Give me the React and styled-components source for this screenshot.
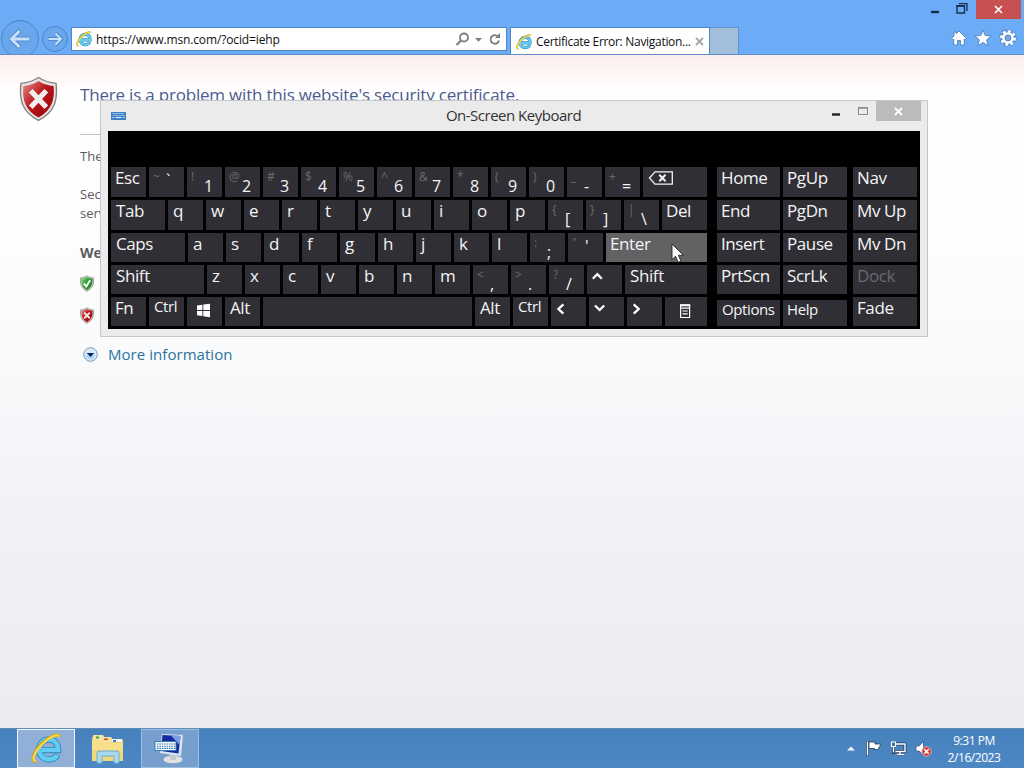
import styled, { createGlobalStyle, css } from 'styled-components';

const mainRows = [
  [
    { label: 'Esc' },
    { shifted: '~', label: '`', raised: true },
    { shifted: '!', label: '1' },
    { shifted: '@', label: '2' },
    { shifted: '#', label: '3' },
    { shifted: '$', label: '4' },
    { shifted: '%', label: '5' },
    { shifted: '^', label: '6' },
    { shifted: '&', label: '7' },
    { shifted: '*', label: '8' },
    { shifted: '(', label: '9' },
    { shifted: ')', label: '0' },
    { shifted: '_', label: '-' },
    { shifted: '+', label: '=' },
    { icon: 'backspace', width: 64 },
  ],
  [
    { label: 'Tab', width: 54, indent: 5 },
    ...'qwertyuiop'.split('').map(label => ({ label, indent: 5 })),
    { shifted: '{', label: '[' },
    { shifted: '}', label: ']' },
    { shifted: '|', label: '\\' },
    { label: 'Del', width: 45 },
  ],
  [
    { label: 'Caps', width: 74, indent: 5 },
    ...'asdfghjkl'.split('').map(label => ({ label, indent: 5 })),
    { shifted: ':', label: ';' },
    { shifted: '"', label: "'", raised: true },
    { label: 'Enter', width: 101, active: true },
  ],
  [
    { label: 'Shift', width: 93, indent: 5 },
    ...'zxcvbnm'.split('').map(label => ({ label, indent: 5 })),
    { shifted: '<', label: ',' },
    { shifted: '>', label: '.' },
    { shifted: '?', label: '/' },
    { icon: 'up' },
    { label: 'Shift', width: 82, indent: 5 },
  ],
  [
    { label: 'Fn' },
    { label: 'Ctrl', small: true, indent: 5 },
    { icon: 'windows' },
    { label: 'Alt', indent: 5 },
    { label: '', width: 209 },
    { label: 'Alt', indent: 5 },
    { label: 'Ctrl', small: true, indent: 5 },
    { icon: 'left' },
    { icon: 'down' },
    { icon: 'right' },
    { icon: 'menu', width: 42 },
  ],
];

const sideColumns = [
  ['Home', 'End', 'Insert', 'PrtScn', 'Options'],
  ['PgUp', 'PgDn', 'Pause', 'ScrLk', 'Help'],
  ['Nav', 'Mv Up', 'Mv Dn', 'Dock', 'Fade'],
];

const rowHeights = [30, 30, 29, 29, 29];

const KeyIcon = ({ name }) => {
  switch (name) {
    case 'backspace':
      return (
        <svg width='35' height='29' viewBox='0 0 35 29' fill='none' stroke='#f4f4f4'>
          <path d='M6.5 11 L12 4.8 H29.3 V17.2 H12 Z' strokeWidth='1.3' />
          <path d='M16.3 7.8 L22.5 14.2 M22.5 7.8 L16.3 14.2' strokeWidth='2' />
        </svg>
      );
    case 'windows':
      return (
        <svg width='35' height='29' viewBox='0 0 35 29' fill='#fff'>
          <path d='M10 8.6 L15.4 7.8 V13 H10 Z M16.3 7.6 L23 6.7 V13 H16.3 Z M10 13.9 H15.4 V19.1 L10 18.3 Z M16.3 13.9 H23 V20.2 L16.3 19.2 Z' />
        </svg>
      );
    case 'menu':
      return (
        <svg width='42' height='29' viewBox='0 0 42 29' fill='none' stroke='#fff' strokeWidth='1.2'>
          <path d='M15.6 8 H24.6 V20.5 H15.6 Z M15.6 11.2 H24.6 M17.5 14 H22.7 M17.5 16.8 H22.7' />
          <path d='M15 8.3 H25.2' strokeWidth='2' />
        </svg>
      );
    default: {
      const paths = {
        up: 'M5.8 13.7 L10.3 9.2 L14.8 13.7',
        down: 'M6 8.5 L10.6 13 L15.2 8.5',
        left: 'M12.4 7.3 L7.4 12 L12.4 16.7',
        right: 'M6.7 7.3 L11.7 12 L6.7 16.7',
      };
      return (
        <svg width='35' height='29' viewBox='0 0 35 29' fill='none' stroke='#fff' strokeWidth='2.3'>
          <path d={paths[name]} />
        </svg>
      );
    }
  }
};

const IeLogo = ({ size = 18 }) => (
  <svg width={size} height={size} viewBox='0 0 32 32' fill='none'>
    <path
      d='M11 17.6 H28 C28 10.5 24 6.8 18.6 6.8 C12.5 6.8 8.4 11 8.4 17 C8.4 23 12.5 27.2 18.6 27.2 C23 27.2 26 25.2 27.3 22.2'
      stroke='#2a86bd'
      strokeWidth='6.4'
    />
    <path
      d='M11 17.6 H28 C28 10.5 24 6.8 18.6 6.8 C12.5 6.8 8.4 11 8.4 17 C8.4 23 12.5 27.2 18.6 27.2 C23 27.2 26 25.2 27 22.6'
      stroke='#62cdf0'
      strokeWidth='4.6'
    />
    <path
      d='M5 29.5 C-1 29 3.5 18.5 11.5 10.5 C19 3.2 27.5 0.2 29.5 3.5'
      stroke='#cf9d17'
      strokeWidth='3.4'
    />
    <path
      d='M5 29 C-0.5 28.5 4 19 12 11 C19.5 3.6 27.5 0.6 29.3 3.6'
      stroke='#f9dd45'
      strokeWidth='2.2'
    />
  </svg>
);

const Shield = ({ width, height, ok }) => (
  <svg width={width} height={height} viewBox='0 0 40 46'>
    <defs>
      <linearGradient id={ok ? 'shieldOk' : 'shieldBad'} x1='0' y1='0' x2='1' y2='1'>
        <stop offset='0' stopColor={ok ? '#8bd67c' : '#e68a8a'} />
        <stop offset='0.45' stopColor={ok ? '#2c9b2e' : '#b9191e'} />
        <stop offset='0.75' stopColor={ok ? '#278b2a' : '#a80a10'} />
        <stop offset='1' stopColor={ok ? '#55bb4b' : '#e23a35'} />
      </linearGradient>
    </defs>
    <path
      d='M20 1 C26 5 31 6.5 38 7 C40 25 36 37 20 45 C4 37 0 25 2 7 C9 6.5 14 5 20 1 Z'
      fill='#e6e4e2'
      stroke='#85817f'
      strokeWidth={width < 20 ? 2.4 : 1.4}
    />
    <path
      d='M20 4.5 C26 8 30 9 35.5 9.6 C37 24 33.5 34.5 20 42 C6.5 34.5 3 24 4.5 9.6 C10 9 14 8 20 4.5 Z'
      fill={`url(#${ok ? 'shieldOk' : 'shieldBad'})`}
    />
    {ok ? (
      <path d='M11 23 L18 31 L29 14' fill='none' stroke='#fff' strokeWidth='5.5' />
    ) : (
      <path d='M12 14.5 L28 31.5 M28 14.5 L12 31.5' stroke='#f3eeee' strokeWidth='5.4' />
    )}
  </svg>
);

const Key = ({ label, shifted, raised, icon, width = 35, indent = 4, small, active, dim }) => (
  <KeyCap $width={width} $active={active}>
    {icon && <KeyIcon name={icon} />}
    {shifted && <Shifted>{shifted}</Shifted>}
    {!icon && shifted && <Base $raised={raised}>{label}</Base>}
    {!icon && !shifted && (
      <Label $small={small} $dim={dim} $indent={indent}>
        {label}
      </Label>
    )}
  </KeyCap>
);

const Browser = () => (
  <Chrome>
    <CaptionRow>
      <svg width='8' height='14'>
        <path d='M0 12 H8' stroke='#14304e' strokeWidth='2.4' />
      </svg>
      <svg width='12' height='14' fill='none' stroke='#14304e'>
        <path d='M1 6 H8.5 V13 H1 Z' strokeWidth='1.4' />
        <path d='M0.5 5.8 H9' strokeWidth='1.6' />
        <path d='M3 3.7 H11 V11' strokeWidth='1.3' />
      </svg>
      <CloseButton>
        <svg width='9' height='9' viewBox='0 0 9 9'>
          <path d='M1 1 L8 8 M8 1 L1 8' stroke='#fff' strokeWidth='1.7' />
        </svg>
      </CloseButton>
    </CaptionRow>
    <NavRow>
      <RoundButton $size={38}>
        <svg width='22' height='20' viewBox='0 0 22 20' fill='none'>
          <path d='M21 10 H3 M11 1.5 L2.5 10 L11 18.5' stroke='#4b83c2' strokeWidth='4.6' />
          <path d='M20.5 10 H3 M10.5 2 L2.5 10 L10.5 18' stroke='#c8e1fb' strokeWidth='3' />
        </svg>
      </RoundButton>
      <RoundButton $size={26}>
        <svg width='15' height='14' viewBox='0 0 15 14' fill='none'>
          <path d='M0 7 H13 M7.5 1 L13.5 7 L7.5 13' stroke='#4b83c2' strokeWidth='3.4' />
          <path d='M0.5 7 H13 M7.5 1.5 L13 7 L7.5 12.5' stroke='#c8e1fb' strokeWidth='2' />
        </svg>
      </RoundButton>
      <AddressBar>
        <IeLogo size={16} />
        <Url>https://www.msn.com/?ocid=iehp</Url>
        <svg width='46' height='16' viewBox='0 0 46 16' fill='none' stroke='#7d7d7d'>
          <circle cx='9' cy='6.5' r='4' strokeWidth='1.8' />
          <path d='M6 9.5 L1.5 14' strokeWidth='2.2' />
          <path d='M20 7 H27 L23.5 10.7 Z' fill='#7d7d7d' stroke='none' />
          <path d='M43 5.5 A4.3 4.3 0 1 0 44 9.5' strokeWidth='1.8' />
          <path d='M40 7 H45 V2 Z' fill='#7d7d7d' stroke='none' />
        </svg>
      </AddressBar>
      <Tab>
        <IeLogo size={16} />
        <TabTitle>Certificate Error: Navigation...</TabTitle>
        <svg width='9' height='9' viewBox='0 0 9 9'>
          <path d='M1 1 L8 8 M8 1 L1 8' stroke='#aaa' strokeWidth='2' />
        </svg>
      </Tab>
      <NewTab />
      <Tools>
        <svg width='16' height='16' viewBox='0 0 16 16'>
          <path
            d='M8 1 L15.5 8.5 L14 9.8 L13.2 9 V15 H9.5 V10.5 H6.5 V15 H2.8 V9 L2 9.8 L0.5 8.5 L3 6 V2 H5.2 V3.8 Z'
            fill='#fff'
            stroke='#4377b3'
            strokeWidth='0.8'
          />
        </svg>
        <svg width='18' height='18' viewBox='0 0 18 18'>
          <path
            d='M9 1 L11.2 6.6 L17.2 7 L12.6 10.8 L14.1 16.7 L9 13.4 L3.9 16.7 L5.4 10.8 L0.8 7 L6.8 6.6 Z'
            fill='#fff'
            stroke='#4377b3'
            strokeWidth='0.8'
          />
        </svg>
        <svg width='18' height='18' viewBox='0 0 18 18' fill='none'>
          <circle cx='9' cy='9' r='6.8' stroke='#4377b3' strokeWidth='3.6' strokeDasharray='3.7 1.64' />
          <circle cx='9' cy='9' r='6.6' stroke='#fff' strokeWidth='2.8' strokeDasharray='2.7 2.484' />
          <circle cx='9' cy='9' r='4.5' stroke='#fff' strokeWidth='2.6' />
          <circle cx='9' cy='9' r='2.9' fill='#7ba9de' stroke='#4377b3' strokeWidth='0.7' />
        </svg>
      </Tools>
    </NavRow>
  </Chrome>
);

const CertificatePage = () => (
  <Page>
    <ShieldColumn>
      <Shield width={39} height={46} />
    </ShieldColumn>
    <PageBody>
      <Heading>There is a problem with this website's security certificate.</Heading>
      <Rule />
      <Text>The</Text>
      <Text $top={19}>Sec</Text>
      <Text>serv</Text>
      <Text $top={20} $bold>
        We
      </Text>
      <Choice $top={13}>
        <Shield width={14} height={17} ok />
      </Choice>
      <Choice $top={15}>
        <Shield width={14} height={17} />
      </Choice>
      <More>
        <svg width='15' height='15' viewBox='0 0 15 15'>
          <circle cx='7.5' cy='7.5' r='6.8' fill='#d6eaf8' stroke='#8298b4' />
          <path d='M3 8 A4.5 4.5 0 0 0 12 8 Z' fill='#a9d9f4' />
          <path d='M3.7 6 H11.3 L7.5 10 Z' fill='#0b2260' />
        </svg>
        More information
      </More>
    </PageBody>
  </Page>
);

const OnScreenKeyboard = () => (
  <KeyboardWindow>
    <TitleBar>
      <svg width='15' height='8' viewBox='0 0 15 8'>
        <rect width='15' height='8' rx='0.5' fill='#3b82c4' />
        <path
          d='M1.5 1.5 H13.5 M2.5 3.5 H13.5'
          stroke='#e4f1fb'
          strokeDasharray='1 1'
        />
        <path d='M1.5 5.5 H3 M4.5 5.5 H10.5 M12 5.5 H13.5' stroke='#e4f1fb' />
      </svg>
      <Title>On-Screen Keyboard</Title>
      <TitleButton $width={26}>
        <svg width='8' height='16'>
          <path d='M0 13.5 H8' stroke='#222' strokeWidth='2.4' />
        </svg>
      </TitleButton>
      <TitleButton $width={17}>
        <svg width='10' height='18' fill='none' stroke='#8b8b8b'>
          <path d='M0.5 6.5 H9.5 V13.5 H0.5 Z' />
          <path d='M0 7 H10' strokeWidth='1.5' />
        </svg>
      </TitleButton>
      <TitleClose>
        <svg width='9' height='9' viewBox='0 0 9 9'>
          <path d='M1 1 L8 8 M8 1 L1 8' stroke='#fff' strokeWidth='1.8' />
        </svg>
      </TitleClose>
    </TitleBar>
    <Keyboard>
      <MainKeys>
        {mainRows.map((row, i) => (
          <Row key={i} $height={rowHeights[i]}>
            {row.map((key, j) => (
              <Key key={j} {...key} />
            ))}
          </Row>
        ))}
      </MainKeys>
      {sideColumns.map((column, i) => (
        <SideColumn key={column[0]} $left={[10, 3, 6][i]}>
          {column.map((label, j) => (
            <Row key={label} $height={rowHeights[j]} $inset={i < 2 && j === 4}>
              <Key
                label={label}
                width={i === 0 ? 63 : 64}
                indent={label === 'Options' ? 5 : 4}
                small={i < 2 && j === 4}
                dim={label === 'Dock'}
              />
            </Row>
          ))}
        </SideColumn>
      ))}
    </Keyboard>
  </KeyboardWindow>
);

const Taskbar = () => (
  <Bar>
    <TaskButton $state='current'>
      <IeLogo size={31} />
    </TaskButton>
    <TaskButton>
      <svg width='34' height='30' viewBox='0 0 34 30'>
        <path d='M1 3 H12 L14 5 H31 Q32 5 32 6 V27 H1 Z' fill='#e8c55c' />
        <path d='M2 2 Q2 1 3 1 H12 L14 4 V7 H2 Z' fill='#f5e3a2' />
        <path d='M13 3 H20 L22 6 V8 H13 Z' fill='#f5e3a2' />
        <path d='M5 2.5 H8 V4.5 H5 Z' fill='#3f9a4a' />
        <path d='M13 4.5 H17 V6.5 H13 Z' fill='#c4472c' />
        <path d='M21 5 H31 V8 H21 Z' fill='#f4f7f5' />
        <path d='M22 6 H25 V8 H22 Z' fill='#2c7fc4' />
        <path d='M1 6 H18 L20 8.5 H32 V27 H1 Z' fill='#f8df8c' />
        <path d='M1 16 H32 V27 H1 Z' fill='#f0d273' opacity='0.6' />
        <path
          d='M6 29 V19 Q6 17 8 17 H26 Q28 17 28 19 V29 H23 V22 H11 V29 Z'
          fill='#a9d9ea'
          stroke='#64b2d0'
        />
      </svg>
    </TaskButton>
    <TaskButton $state='open'>
      <svg width='32' height='31' viewBox='0 0 32 31'>
        <ellipse cx='19' cy='26.5' rx='9.5' ry='3.8' fill='#dfe1e2' />
        <path d='M15 19 H23 L22 27 H16 Z' fill='#c3cad0' />
        <path d='M8 1 L29 2 L27 23 L6 20 Z' fill='#dbe5ef' />
        <path d='M8.5 2 L26.5 3 L24.5 20.5 L7 18 Z' fill='#1428a0' />
        <path d='M17 2.5 L26.5 3 L25.5 12 Z' fill='#7d9fe0' />
        <rect x='1' y='8.5' width='21' height='9' fill='#f3f8fc' stroke='#377fae' />
        <path
          d='M3 11 H21 M3 13.2 H21 M3 15.4 H21'
          stroke='#3479b5'
          strokeWidth='1.1'
          strokeDasharray='1.5 0.9'
        />
      </svg>
    </TaskButton>
    <Tray>
      <svg width='8' height='5' viewBox='0 0 8 5'>
        <path d='M0 4.5 L4 0.5 L8 4.5 Z' fill='#f2f8fd' />
      </svg>
      <svg width='16' height='17' viewBox='0 0 16 17'>
        <path d='M1.5 1 V16' stroke='#1d3d63' strokeWidth='3' />
        <path d='M1.5 1.5 V15.5' stroke='#fff' strokeWidth='1.5' />
        <path
          d='M3 2 H9 V4 H15 L13.5 6.5 L12 9.5 H8.5 V8.5 H3 Z'
          fill='#fff'
          stroke='#1d3d63'
          strokeWidth='0.8'
        />
      </svg>
      <svg width='17' height='17' viewBox='0 0 17 17' fill='none'>
        <path
          d='M5 4 H15 V11.5 H5.5 M10 12 V14.5 M7 14.5 H14 M3.5 6 V14'
          stroke='#1d3d63'
          strokeWidth='3'
        />
        <path
          d='M5 4 H15 V11.5 H5.5 M10 12 V14.5 M7 14.5 H14 M3.5 6 V12.5'
          stroke='#fff'
          strokeWidth='1.4'
        />
        <path d='M1.5 2 H5.5 V6.5 H1.5 Z' fill='#3b699c' stroke='#fff' strokeWidth='1.2' />
      </svg>
      <svg width='17' height='17' viewBox='0 0 17 17'>
        <path d='M1 6 H4 L8.5 1.5 V15 L4 11 H1 Z' fill='#fff' stroke='#315d8e' strokeWidth='0.8' />
        <circle cx='11.5' cy='11.5' r='4.7' fill='#d63b35' stroke='#f3dddd' strokeWidth='0.6' />
        <path
          d='M9.3 9.3 L13.7 13.7 M13.7 9.3 L9.3 13.7'
          stroke='#fff'
          strokeWidth='1.5'
        />
      </svg>
    </Tray>
    <Clock>
      <span>9:31 PM</span>
      <span>2/16/2023</span>
    </Clock>
  </Bar>
);

const App = () => (
  <Desktop>
    <GlobalStyle />
    <Browser />
    <CertificatePage />
    <Taskbar />
    <OnScreenKeyboard />
    <Pointer width='14' height='21' viewBox='0 0 14 21'>
      <path
        d='M1 1 V16.5 L4.6 13.2 L7.2 19.3 L10 18.1 L7.4 12.3 H12.3 Z'
        fill='#fff'
        stroke='#222'
        strokeWidth='0.9'
      />
    </Pointer>
  </Desktop>
);

export default App;

const GlobalStyle = createGlobalStyle`
  * {
    box-sizing: border-box;
  }
  body {
    margin: 0;
    overflow: hidden;
    font-family: 'Open Sans', 'Noto Sans', sans-serif;
  }
  svg {
    display: block;
    flex: none;
  }
`;

const Desktop = styled.div`
  position: relative;
  display: flex;
  flex-direction: column;
  width: 1024px;
  height: 768px;
  overflow: hidden;
`;

const Chrome = styled.header`
  height: 55px;
  overflow: hidden;
  background: #6cacf7;
  border-bottom: 1px solid #5c8fc9;
`;

const CaptionRow = styled.div`
  display: flex;
  justify-content: flex-end;
  gap: 17px;
  height: 19px;
  padding-right: 3px;
`;

const CloseButton = styled.div`
  display: flex;
  align-items: center;
  justify-content: center;
  width: 45px;
  height: 19px;
  margin-left: -9px;
  background: #c75050;
`;

const NavRow = styled.nav`
  display: flex;
  align-items: flex-start;
  height: 36px;
  padding: 1px 7px 0 1px;
`;

const RoundButton = styled.div`
  display: flex;
  flex: none;
  align-items: center;
  justify-content: center;
  width: ${props => props.$size}px;
  height: ${props => props.$size}px;
  margin: ${props => (props.$size === 38 ? '0 3px 0 0' : '6px 3px 0 0')};
  border: 1px solid #4886cb;
  border-radius: 50%;
  background: #6aa6ec;
`;

const AddressBar = styled.div`
  display: flex;
  align-items: center;
  width: 436px;
  height: 24px;
  margin-top: 7px;
  padding: 0 5px 0 4px;
  background: #fff;
  border: 1px solid #4d86c4;
`;

const Url = styled.span`
  flex: 1;
  margin-left: 4px;
  font-size: 12px;
  letter-spacing: -0.13px;
  color: #111;
`;

const Tab = styled.div`
  display: flex;
  align-items: center;
  width: 200px;
  height: 28px;
  margin: 7px 0 0 3px;
  padding: 0 5px;
  background: #fff;
  border: 1px solid #4d86c4;
  border-bottom: 0;
`;

const TabTitle = styled.span`
  flex: 1;
  margin-left: 4px;
  font-size: 12px;
  letter-spacing: -0.3px;
  white-space: nowrap;
  color: #111;
`;

const NewTab = styled.div`
  width: 29px;
  height: 28px;
  margin-top: 7px;
  background: #a3bedb;
  border: 1px solid #5f93cd;
  border-left: 0;
`;

const Tools = styled.div`
  display: flex;
  align-items: center;
  gap: 7px;
  height: 36px;
  margin-left: auto;
`;

const Page = styled.main`
  display: flex;
  height: 673px;
  padding: 0 0 0 19px;
  background:
    linear-gradient(#fdecec 0, #fef5f5 16px, rgba(255, 255, 255, 0) 38px),
    linear-gradient(#fff 0, #fdfdfe 200px, #f9fafb 300px, #f1f2f6 460px, #ebecf0 673px);
`;

const ShieldColumn = styled.div`
  width: 61px;
  padding-top: 21px;
`;

const PageBody = styled.section`
  width: 840px;
`;

const Heading = styled.h1`
  height: 78px;
  margin: 0;
  padding-top: 27px;
  font-size: 17px;
  font-weight: 400;
  line-height: 26px;
  letter-spacing: -0.2px;
  color: #4c5a8e;
`;

const Rule = styled.div`
  height: 1px;
  margin: 1px 0 12px;
  background: #c5c5c8;
`;

const Text = styled.p`
  height: 19px;
  margin: ${props => props.$top || 0}px 0 0;
  font-size: ${props => (props.$bold ? 14 : 13)}px;
  font-weight: ${props => (props.$bold ? 700 : 400)};
  line-height: 19px;
  color: #5b5b5f;
`;

const Choice = styled.div`
  height: 17px;
  margin-top: ${props => props.$top}px;
`;

const More = styled.div`
  display: flex;
  align-items: center;
  gap: 10px;
  height: 22px;
  margin: 19px 0 0 3px;
  font-size: 15px;
  letter-spacing: 0.05px;
  color: #2a74a0;
`;

const KeyboardWindow = styled.section`
  position: absolute;
  left: 100px;
  top: 100px;
  width: 828px;
  height: 237px;
  padding: 0 7px;
  background: #ebebec;
  border: 1px solid #c5c7ca;
`;

const TitleBar = styled.div`
  display: flex;
  height: 30px;

  > svg {
    margin: 11px 0 0 3px;
  }
`;

const Title = styled.div`
  flex: 1;
  padding-left: 69px;
  font-size: 15px;
  line-height: 29px;
  letter-spacing: -0.5px;
  text-align: center;
  color: #333;
`;

const TitleButton = styled.div`
  width: ${props => props.$width}px;
`;

const TitleClose = styled.div`
  display: flex;
  align-items: center;
  justify-content: center;
  width: 45px;
  height: 20px;
  margin: 0 -1px 0 1px;
  background: #bbb;
`;

const Keyboard = styled.div`
  display: flex;
  height: 198px;
  padding: 36px 3px 3px;
  background: #000;
`;

const MainKeys = styled.div`
  display: flex;
  flex-direction: column;
  gap: 3px;
`;

const SideColumn = styled(MainKeys)`
  margin-left: ${props => props.$left}px;
`;

const Row = styled.div`
  display: flex;
  gap: 3px;
  height: ${props => props.$height}px;
  padding-top: ${props => (props.$inset ? 3 : 0)}px;
`;

const KeyCap = styled.div`
  display: flex;
  flex: none;
  width: ${props => props.$width}px;
  height: 100%;
  overflow: hidden;
  background: ${props => (props.$active ? '#626265' : '#302f36')};
  color: #f4f4f4;
`;

const Label = styled.span`
  padding-left: ${props => props.$indent}px;
  font-size: ${props => (props.$small ? 15 : 17)}px;
  line-height: ${props => (props.$small ? 19 : 21)}px;
  letter-spacing: -0.4px;
  white-space: nowrap;
  color: ${props => (props.$dim ? '#69696e' : 'inherit')};
`;

const Shifted = styled.span`
  width: 17px;
  padding-left: 4px;
  font-size: 12px;
  line-height: 20px;
  color: #6b6a70;
`;

const Base = styled.span`
  font-size: 16px;
  line-height: ${props => (props.$raised ? 26 : 39)}px;
`;

const Bar = styled.footer`
  display: flex;
  height: 40px;
  padding-left: 17px;
  background: linear-gradient(#4781bd, #4e88c4);
  border-top: 1px solid #5f8db9;
`;

const TaskButton = styled.div`
  display: flex;
  align-items: center;
  justify-content: center;
  width: 58px;
  height: 39px;
  margin-right: 4px;
  border: 1px solid transparent;
  ${props =>
    props.$state === 'current' &&
    css`
      background: #92b0d7;
      border-color: #f2f7fc;
    `}
  ${props =>
    props.$state === 'open' &&
    css`
      background: #769fcd;
      border-color: #9dbde0;
    `}
`;

const Tray = styled.div`
  display: flex;
  align-items: center;
  gap: 8px;
  margin-left: auto;

  > :first-child {
    margin-right: 3px;
  }
`;

const Clock = styled.div`
  display: flex;
  flex-direction: column;
  align-items: center;
  width: 84px;
  margin-right: 8px;
  padding-top: 3px;
  font-size: 12px;
  line-height: 17px;
  letter-spacing: -0.45px;
  color: #fff;
`;

const Pointer = styled.svg`
  position: absolute;
  left: 671px;
  top: 243px;
`;
